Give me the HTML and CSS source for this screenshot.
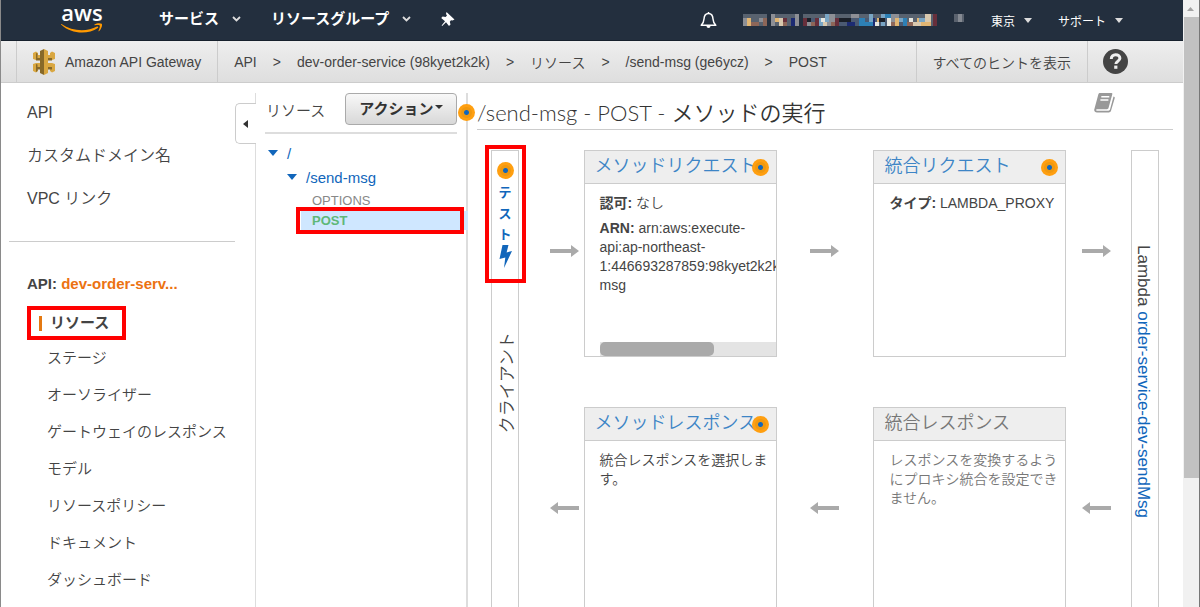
FILE: index.html
```html
<!DOCTYPE html>
<html lang="ja">
<head>
  <meta charset="UTF-8">
  <meta name="viewport" content="width=device-width, initial-scale=1.0">
  <title>API Gateway</title>
  <link rel="stylesheet" href="styles.css">
</head>
<body>
  <div class="page">
    <header class="topbar">
      <a href="#" class="logo" aria-label="aws">
        <span class="logo-text">aws</span>
        <svg class="smile" width="42" height="11" viewBox="0 0 42 11">
          <path d="M0.5 1C11 8.5 26 9 36 3.6c1-.5 1.8.5.8 1.3C27 12 10 11 .3 1.8c-.5-.5-.2-1 .2-.8z" fill="#f90"/>
          <path d="M33.500 1.500c2-1.400 6-1.500 7.200-.7 1 .8-.2 5.300-2.500 7.300-.5.400-.9.200-.7-.3.700-1.500 1.800-4.400 1.200-5.200-.6-.8-3.300-.5-4.700-.4-.6 0-.8-.4-.5-.7z" fill="#f90"/>
        </svg>
      </a>
      <nav class="top-links">
        <a href="#">サービス <svg width="9" height="6" viewBox="0 0 9 6"><path d="M1 1l3.500 3.500L8 1" fill="none" stroke="#ddd" stroke-width="1.800"/></svg></a>
        <a href="#">リソースグループ <svg width="9" height="6" viewBox="0 0 9 6"><path d="M1 1l3.500 3.500L8 1" fill="none" stroke="#ddd" stroke-width="1.800"/></svg></a>
        <a href="#" aria-label="pin">
          <svg class="pin" width="14" height="15" viewBox="0 0 14 15"><path d="M5.500 0L13.500 7.600 11.500 8.500 10 8.300 8.800 9.800 9.500 12.500 8 14 5 10.300 1.200 14 .6 13.400 4 9.200.2 6 1.600 4.500 4.600 5 6 3.500 5 2z" fill="#fff"/></svg>
        </a>
      </nav>
      <div class="top-right">
        <a href="#" aria-label="bell">
          <svg class="bell" width="17" height="18" viewBox="0 0 17 18"><path d="M8.500 1v1.500M1.200 14.200c2-1.700 2.600-3 2.800-6.200.2-3.500 1.700-5.500 4.500-5.500S12.800 4.500 13 8c.2 3.200.8 4.500 2.800 6.200z" fill="none" stroke="#fff" stroke-width="1.500" stroke-linejoin="round"/><path d="M6.500 15h4a2 2 0 0 1-4 0z" fill="#fff"/></svg>
        </a>
        <!-- hidden account name -->
        <svg class="account" width="222" height="12" viewBox="0 0 222 12" shape-rendering="crispEdges">
          <path fill="#58626f" d="M0 0h24v12H0zM28 0h28v12H28zM60 0h104v4H60zM164 0h30v12h-30z"/>
          <path fill="#4b5a72" d="M60 4h104v8H60z"/>
          <path fill="#8d8f95" d="M0 4h4v8H0zM16 4h4v4h-4zM28 0h4v12h-4zM52 0h4v12h-4zM64 4h4v8h-4zM84 0h8v12h-8zM108 0h8v4h-8zM148 0h8v12h-8z"/>
          <path fill="#e0b573" d="M4 4h4v8H4zM32 4h8v4h-8zM134 4h4v4h-4zM152 4h4v8h-4zM174 4h14v8h-14z"/>
          <path fill="#d8c8ae" d="M36 4h4v8h-4zM80 4h4v8h-4zM170 8h8v4h-8zM182 0h6v8h-6z"/>
          <path fill="#8d6658" d="M8 8h8v4H8zM20 4h4v8h-4zM40 8h4v4h-4zM68 8h4v4h-4zM88 8h8v4h-8zM146 8h6v4h-6zM162 8h8v4h-8z"/>
          <path fill="#672f3b" d="M40 4h4v4h-4zM60 4h4v8h-4zM72 4h4v8h-4zM92 4h4v8h-4zM190 0h4v12h-4z"/>
          <path fill="#1c2b72" d="M48 4h4v8h-4zM104 8h8v4h-8zM128 4h4v8h-4z"/>
          <path fill="#79a5c4" d="M76 4h4v8h-4zM82 0h4v8h-4zM126 0h4v8h-4zM138 0h4v12h-4zM156 4h4v4h-4zM176 4h6v4h-6z"/>
          <path fill="#2d80b5" d="M116 4h6v8h-6zM122 8h8v4h-8zM142 0h6v4h-6zM160 4h4v8h-4z"/>
          <path fill="#e6e6df" d="M78 4h4v4h-4zM132 8h4v4h-4zM144 4h4v8h-4zM166 4h4v4h-4z"/>
          <path fill="#1b2029" d="M64 4h4v4h-4zM96 4h12v4H96zM136 4h6v4h-6z"/>
          <path fill="#5a626e" d="M211 0h10v8h-10z"/>
          <path fill="#858a92" d="M215 0h4v8h-4z"/>
        </svg>
        <a href="#">東京 <svg width="8" height="5" viewBox="0 0 8 5"><path d="M0 0h8L4 5z" fill="#ddd"/></svg></a>
        <a href="#">サポート <svg width="8" height="5" viewBox="0 0 8 5"><path d="M0 0h8L4 5z" fill="#ddd"/></svg></a>
      </div>
    </header>

    <div class="crumbs">
      <a href="#" class="service">
        <svg width="22" height="26" viewBox="0 0 22 26">
          <path d="M0 4l3-1.500V11L0 10zM0 15l3-1v9.500L0 22zM22 4l-3-1.500V11l3-1zM22 15l-3-1v9.500l3-1.500z" fill="#d9a741"/>
          <path d="M3 2.500L5 4v2h12V4l2-1.500V11H3zM3 14h16v9.500L17 22v-2H5v2l-2 1.500z" fill="#d9a741"/>
          <path d="M3 9h16v2.500H3zM3 18h16v2.500H3z" fill="#876929"/>
          <path d="M7 2l4-2v26l-4-2z" fill="#876929"/>
          <path d="M11 0l4 2v22l-4 2z" fill="#d9a741"/>
          <path d="M3 4l1.500.5V9H3zM3 15l1.500.5V22L3 23z" fill="#876929"/>
        </svg>
        Amazon API Gateway
      </a>
      <nav class="path">
        <a href="#">API</a><span>&gt;</span>
        <a href="#">dev-order-service (98kyet2k2k)</a><span>&gt;</span>
        <a href="#">リソース</a><span>&gt;</span>
        <a href="#">/send-msg (ge6ycz)</a><span>&gt;</span>
        <a href="#">POST</a>
      </nav>
      <a href="#" class="hints">すべてのヒントを表示</a>
      <a href="#" class="help" aria-label="help">
        <svg width="25" height="25" viewBox="0 0 25 25">
          <circle cx="12.500" cy="12.500" r="12.500" fill="#444"/>
          <path d="M8.300 10c0-2.800 1.800-4.300 4.300-4.300s4.300 1.500 4.300 3.600c0 3.100-4 2.800-4 5.700" fill="none" stroke="#eee" stroke-width="3"/>
          <path d="M11.200 16.600h3.200v3.200h-3.200z" fill="#eee"/>
        </svg>
      </a>
    </div>

    <div class="content">
      <aside class="sidebar">
        <button class="collapse" aria-label="collapse"><svg width="5" height="8" viewBox="0 0 5 8"><path d="M5 0v8L0 4z" fill="#333"/></svg></button>
        <ul class="main-menu">
          <li><a href="#">API</a></li>
          <li><a href="#">カスタムドメイン名</a></li>
          <li><a href="#">VPC リンク</a></li>
        </ul>
        <div class="api-name">API: <a href="#">dev-order-serv...</a></div>
        <ul class="sub-menu">
          <li><a href="#" class="active">リソース</a></li>
          <li><a href="#">ステージ</a></li>
          <li><a href="#">オーソライザー</a></li>
          <li><a href="#">ゲートウェイのレスポンス</a></li>
          <li><a href="#">モデル</a></li>
          <li><a href="#">リソースポリシー</a></li>
          <li><a href="#">ドキュメント</a></li>
          <li><a href="#">ダッシュボード</a></li>
        </ul>
      </aside>

      <section class="resources">
        <div class="res-head">
          <span>リソース</span>
          <button class="action">アクション<svg width="8" height="4" viewBox="0 0 8 4"><path d="M0 0h8L4 4z" fill="#333"/></svg></button>
        </div>
        <span class="dot dot-head"></span>
        <ul class="tree">
          <li class="root"><svg width="10" height="6" viewBox="0 0 10 6"><path d="M0 0h10L5 6z" fill="#1166bb"/></svg><a href="#">/</a></li>
          <li class="path-item"><svg width="10" height="6" viewBox="0 0 10 6"><path d="M0 0h10L5 6z" fill="#1166bb"/></svg><a href="#">/send-msg</a></li>
          <li class="method"><a href="#">OPTIONS</a></li>
          <li class="method selected"><a href="#">POST</a></li>
        </ul>
      </section>

      <main class="execution">
        <div class="title">
          <h1>/send-msg - POST - メソッドの実行</h1>
          <svg width="22" height="20" viewBox="0 0 22 20">
            <path d="M6 0h11.500c.7 0 1 .5.800 1.200L14.500 15c-.2.700-.8 1.200-1.500 1.200H3c-1.200 0-1.200 1.500 0 1.500h11.500c.8 0 1.300-.4 1.500-1.200L19.500 3.500c1 .2 1.500.8 1.200 1.800L17 17.800c-.3 1-1.200 1.700-2.200 1.700H3c-2 0-3.300-1.500-2.600-3.500L4.300 1.500C4.600.500 5 0 6 0z" fill="#999"/>
            <path d="M7.300 3.800h8M6.400 7h8" stroke="#fff" stroke-width="1.400"/>
          </svg>
        </div>

        <div class="flow">
          <div class="bar client">
            <a href="#" class="test">
              <span class="dot"></span>
              <span>テ</span><span>ス</span><span>ト</span>
              <svg width="13" height="23" viewBox="0 0 13 23"><path d="M3.500 0h6L7.600 7.500 13 6 5 23l1.300-10.500L.5 14z" fill="#1166bb"/></svg>
            </a>
            <span class="client-name">クライアント</span>
          </div>

          <div class="arrow first"><svg width="29" height="12" viewBox="0 0 29 12"><path d="M0 4h21V0l8 6-8 6V8H0z" fill="#aaa"/></svg></div>

          <div class="card">
            <div class="card-head"><a href="#">メソッドリクエスト</a><span class="dot"></span></div>
            <div class="card-body">
              <p><b>認可:</b> なし</p>
              <p><b>ARN:</b> arn:aws:execute-api:ap-northeast-1:446693287859:98kyet2k2k<br>msg</p>
            </div>
            <div class="hscroll"><div class="hthumb"></div></div>
          </div>

          <div class="arrow"><svg width="29" height="12" viewBox="0 0 29 12"><path d="M0 4h21V0l8 6-8 6V8H0z" fill="#aaa"/></svg></div>

          <div class="card">
            <div class="card-head"><a href="#">統合リクエスト</a><span class="dot"></span></div>
            <div class="card-body">
              <p><b>タイプ:</b> LAMBDA_PROXY</p>
            </div>
          </div>

          <div class="arrow last"><svg width="29" height="12" viewBox="0 0 29 12"><path d="M0 4h21V0l8 6-8 6V8H0z" fill="#aaa"/></svg></div>

          <div class="bar lambda">
            <span>Lambda <a href="#">order-service-dev-sendMsg</a></span>
          </div>

          <div class="arrow first"><svg width="29" height="12" viewBox="0 0 29 12"><path d="M29 4H8V0L0 6l8 6V8h21z" fill="#aaa"/></svg></div>

          <div class="card">
            <div class="card-head"><a href="#">メソッドレスポンス</a><span class="dot"></span></div>
            <div class="card-body">
              <p>統合レスポンスを選択します。</p>
            </div>
          </div>

          <div class="arrow"><svg width="29" height="12" viewBox="0 0 29 12"><path d="M29 4H8V0L0 6l8 6V8h21z" fill="#aaa"/></svg></div>

          <div class="card disabled">
            <div class="card-head"><span>統合レスポンス</span></div>
            <div class="card-body">
              <p>レスポンスを変換するようにプロキシ統合を設定できません。</p>
            </div>
          </div>

          <div class="arrow last"><svg width="29" height="12" viewBox="0 0 29 12"><path d="M29 4H8V0L0 6l8 6V8h21z" fill="#aaa"/></svg></div>
        </div>
      </main>
    </div>
  </div>

  <div class="scrollbar">
    <svg width="15" height="17" viewBox="0 0 15 17"><path d="M4 11h7L7.500 7z" fill="#a3a3a3"/></svg>
    <div class="thumb"></div>
  </div>
</body>
</html>
```

FILE: styles.css
```css
* {
  box-sizing: border-box;
}

body {
  display: flex;
  height: 100vh;
  margin: 0;
  overflow: hidden;
  border-left: 1px solid #8a8a8a;
  border-right: 1px solid #777;
  background: #fff;
  color: #444;
  font-family: "Liberation Sans", "Noto Sans CJK JP", sans-serif;
  font-size: 14px;
  font-weight: 350;
}

a {
  color: inherit;
  text-decoration: none;
}

b {
  font-weight: bold;
}

ul {
  margin: 0;
  padding: 0;
  list-style: none;
}

svg {
  display: block;
  flex: none;
}

.page {
  display: flex;
  flex-direction: column;
  flex: 1;
  min-width: 0;
}

/* Top bar */
.topbar {
  display: flex;
  flex: none;
  align-items: center;
  height: 41px;
  padding: 0 60px;
  background: #232f3e;
  border-bottom: 1px solid #16202c;
  color: #fff;
}

.logo {
  width: 42px;
  margin-right: 56px;
}

.logo-text {
  display: block;
  height: 17px;
  text-align: center;
  font: 600 22px/13px "Open Sans", sans-serif;
}

.top-links,
.top-right {
  display: flex;
  align-items: center;
}

.top-links {
  gap: 30px;
  font-size: 15px;
  font-weight: bold;
  line-height: 18px;
  padding-bottom: 2px;
}

.top-links a {
  display: flex;
  align-items: center;
  gap: 13px;
}

.top-right {
  gap: 26px;
  margin-left: auto;
  font-size: 12px;
  font-weight: normal;
}

.top-right a {
  display: flex;
  align-items: center;
  gap: 9px;
}

/* Breadcrumbs */
.crumbs {
  display: flex;
  flex: none;
  align-items: stretch;
  height: 42px;
  padding-left: 15px;
  border-bottom: 1px solid #ccc;
  background: linear-gradient(#eee, #dedede);
}

.crumbs a {
  display: flex;
  align-items: center;
}

.crumbs .service {
  gap: 10px;
  padding: 0 16px 0 16px;
  border-left: 1px solid #ccc;
  border-right: 1px solid #ccc;
}

.path {
  display: flex;
  flex: 1;
  align-items: center;
  gap: 16px;
  padding-left: 16px;
}

.crumbs .hints {
  padding: 0 16px;
  border-left: 1px solid #ccc;
  border-right: 1px solid #ccc;
}

.crumbs .help {
  padding: 0 55px 0 15px;
}

.content {
  display: flex;
  flex: 1;
  min-height: 0;
  padding-top: 10px;
}

/* Left menu */
.sidebar {
  position: relative;
  flex: none;
  width: 255px;
  border-right: 1px solid #ddd;
}

.collapse {
  position: absolute;
  top: 10px;
  right: -1px;
  display: flex;
  align-items: center;
  width: 21px;
  height: 41px;
  padding: 0 7px;
  border: 1px solid #ccc;
  border-right: none;
  border-radius: 5px 0 0 5px;
  background: #fff;
}

.main-menu {
  display: grid;
  gap: 19px;
  margin: 0 20px 0 8px;
  padding: 8px 18px 30px;
  border-bottom: 1px solid #ccc;
  font-size: 16px;
  line-height: 24px;
}

.api-name {
  padding: 30px 26px 10px;
  font-size: 15px;
  font-weight: bold;
  line-height: 24px;
}

.api-name a {
  color: #ec7211;
}

.sub-menu {
  padding-left: 26px;
  font-size: 15px;
  line-height: 37px;
}

.sub-menu a {
  padding-left: 20px;
}

.sub-menu li:first-child {
  line-height: 26px;
  height: 33px;
}

.sub-menu .active {
  display: flex;
  align-items: center;
  width: 99px;
  height: 34px;
  padding-left: 8px;
  border: 4px solid #f00;
  font-weight: bold;
}

.sub-menu .active::before {
  content: "";
  width: 3px;
  height: 15px;
  margin-right: 8px;
  background: #e47911;
}

/* Resource tree */
.resources {
  position: relative;
  flex: none;
  width: 212px;
  border-right: 2px solid #ddd;
}

.res-head {
  display: flex;
  align-items: center;
  justify-content: space-between;
  margin: 0 9px;
  padding: 0 0 7px 1px;
  border-bottom: 2px solid #ddd;
  font-size: 15px;
}

.action {
  display: flex;
  align-items: center;
  justify-content: center;
  gap: 1px;
  width: 112px;
  height: 32px;
  padding: 0 0 4px;
  border: 1px solid #aaa;
  border-radius: 4px;
  background: linear-gradient(#f8f8f8, #d8d8d8);
  color: #333;
  font: bold 15px "Liberation Sans", "Noto Sans CJK JP", sans-serif;
}

.dot {
  display: block;
  flex: none;
  width: 17px;
  height: 17px;
  border-radius: 50%;
  background: radial-gradient(circle, #1166bb 2px, #f0980f 3px, #f0980f 5px, #ff9f10 6px);
}

.dot-head {
  position: absolute;
  top: 11px;
  right: -9px;
}

.tree {
  padding-top: 7px;
  color: #1166bb;
  font-size: 15px;
}

.tree li {
  display: flex;
  align-items: center;
  gap: 9px;
  height: 24px;
}

.tree .root {
  padding-left: 12px;
}

.tree .path-item {
  padding-left: 31px;
}

.tree .method {
  height: 22px;
  padding-left: 56px;
  color: #888;
  font-size: 13px;
}

.tree .selected {
  position: relative;
  height: 19px;
  margin: 0 -2px 0 45px;
  padding-left: 11px;
  background: #cfe7ff;
  color: #5fb878;
  font-weight: bold;
}

.selected::after {
  content: "";
  position: absolute;
  inset: -4px 4px -4px -5px;
  border: 4px solid #f00;
}

/* Method execution */
.execution {
  flex: 1;
  min-width: 0;
  padding: 0 10px 0 9px;
}

.title {
  display: flex;
  justify-content: space-between;
  height: 37px;
  padding-right: 57px;
  border-bottom: 1px solid #ccc;
}

.title h1 {
  margin: 0;
  color: #333;
  font: 350 22px/40px Lato, "Noto Sans CJK JP", sans-serif;
}

.flow {
  display: grid;
  grid-template-columns: 28px 2fr 193px 3fr 193px 2fr 28px;
  grid-template-rows: 207px 207px;
  row-gap: 50px;
  padding: 20px 14px 0;
}

.bar {
  display: flex;
  flex-direction: column;
  align-items: center;
  grid-row: 1 / 3;
  border: 1px solid #ccc;
}

.lambda {
  grid-column: 7;
  justify-content: center;
  padding-right: 4px;
  font-size: 17px;
}

.lambda span {
  writing-mode: vertical-rl;
}

.lambda a {
  color: #1166bb;
}

.test {
  position: relative;
  display: flex;
  flex-direction: column;
  align-items: center;
  width: 26px;
  height: 132px;
  padding-top: 11px;
  color: #1166bb;
  font-size: 13px;
  font-weight: bold;
  line-height: 21px;
}

.test .dot {
  margin-bottom: 3px;
}

.test::after {
  content: "";
  position: absolute;
  inset: -6px -8px 0 -7px;
  border: 4px solid #f00;
}

.client-name {
  margin-top: 49px;
  font-size: 17px;
  writing-mode: vertical-rl;
  text-orientation: sideways;
  transform: rotate(180deg);
}

.arrow {
  display: flex;
  align-items: center;
  justify-content: center;
  padding-bottom: 6px;
}

.first {
  justify-content: flex-end;
  padding-right: 5px;
}

.last {
  padding-right: 5px;
}

.card {
  position: relative;
  overflow: hidden;
  border: 1px solid #ccc;
}

.card-head {
  display: flex;
  align-items: center;
  height: 33px;
  padding: 0 7px 0 10px;
  border-bottom: 1px solid #ccc;
  background: #eee;
  color: #3d85c6;
  font-size: 18px;
  line-height: 28px;
  white-space: nowrap;
}

.card-head a,
.card-head > span:first-child {
  flex: 1;
  min-width: 0;
  padding-bottom: 2px;
}

.card-body {
  padding: 10px 0 0 15px;
  line-height: 19px;
}

.card-body p {
  margin: 0 0 6px;
}

.disabled,
.disabled .card-head {
  color: #777;
}

.hscroll {
  position: absolute;
  left: 15px;
  right: 0;
  bottom: 0;
  background: #e4e4e4;
}

.hthumb {
  width: 65%;
  height: 14px;
  border-radius: 5px;
  background: #aaa;
}

/* Window scrollbar */
.scrollbar {
  flex: none;
  width: 16px;
  background: #f1f1f1;
}

.thumb {
  height: 76%;
  margin-left: 1px;
  background: #c1c1c1;
}
```
